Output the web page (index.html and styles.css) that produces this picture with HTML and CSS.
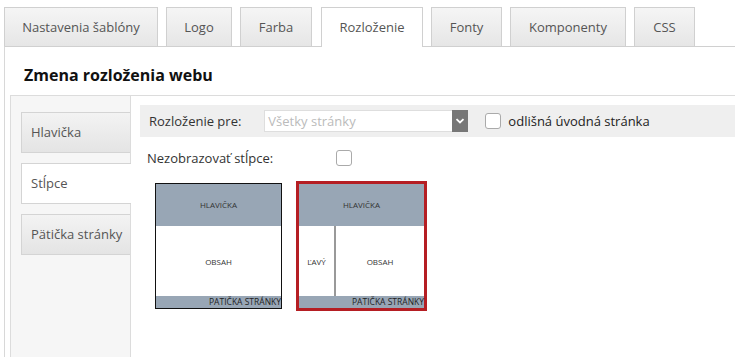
FILE: index.html
```html
<!DOCTYPE html>
<html lang="sk">
<head>
    <meta charset="UTF-8">
    <title>Zmena rozloženia webu</title>
    <link rel="stylesheet" href="styles.css">
</head>
<body>
    <div class="tabs">
        <div class="tab">Nastavenia šablóny</div>
        <div class="tab tab-logo">Logo</div>
        <div class="tab tab-farba">Farba</div>
        <div class="tab active">Rozloženie</div>
        <div class="tab tab-fonty">Fonty</div>
        <div class="tab tab-komp">Komponenty</div>
        <div class="tab tab-css">CSS</div>
    </div>

    <div class="panel">
        <h2 class="title">Zmena rozloženia webu</h2>

        <div class="inner">
            <div class="side">
                <div class="side-tab">Hlavička</div>
                <div class="side-tab active">Stĺpce</div>
                <div class="side-tab">Pätička stránky</div>
            </div>

            <div class="main">
                <div class="form-bar">
                    <span class="label">Rozloženie pre:</span>
                    <div class="select">
                        <span class="select-text">Všetky stránky</span>
                        <span class="select-btn">
                            <svg width="10" height="6" viewBox="0 0 10 6"><path d="M1.5 1.2 L5 4.5 L8.5 1.2" fill="none" stroke="#fff" stroke-width="1.8"/></svg>
                        </span>
                    </div>
                    <span class="check"></span>
                    <span class="check-label">odlišná úvodná stránka</span>
                </div>

                <div class="row">
                    <span class="label">Nezobrazovať stĺpce:</span>
                    <span class="check"></span>
                </div>

                <div class="layouts">
                    <div class="layout">
                        <div class="l-head">HLAVIČKA</div>
                        <div class="l-body">
                            <div class="l-content">OBSAH</div>
                        </div>
                        <div class="l-foot">PATIČKA STRÁNKY</div>
                    </div>
                    <div class="layout selected">
                        <div class="l-head">HLAVIČKA</div>
                        <div class="l-body">
                            <div class="l-left">ĽAVÝ</div>
                            <div class="l-content">OBSAH</div>
                        </div>
                        <div class="l-foot">PATIČKA STRÁNKY</div>
                    </div>
                </div>
            </div>
        </div>
    </div>
</body>
</html>
```

FILE: styles.css
```css
body {
    margin: 0;
    background: #fff;
    font-family: 'Open Sans', 'Noto Sans', sans-serif;
    font-size: 13px;
    color: #333;
    overflow: hidden;
}

.tabs {
    display: flex;
    gap: 8px;
    padding: 7px 0 0 4px;
    position: relative;
    z-index: 1;
}

.tab {
    height: 38px;
    line-height: 38px;
    width: 152px;
    text-align: center;
    color: #555;
    background: linear-gradient(#f5f5f5, #e6e6e6);
    border: 1px solid #d0d0d0;
    border-bottom: none;
    box-sizing: content-box;
}

.tab-logo { width: 64px; }
.tab-farba { width: 70px; }
.tab-fonty { width: 69px; }
.tab-komp { width: 114px; }
.tab-css { width: 59px; }

.tab.active {
    width: 100px;
    margin-left: 1px;
    background: #fff;
    height: 39px;
    margin-bottom: -1px;
}

.panel {
    margin-left: 4px;
    border-top: 1px solid #d0d0d0;
    border-left: 1px solid #d8d8d8;
    height: 320px;
}

.title {
    margin: 0;
    padding: 17px 0 0 19px;
    height: 31px;
    font-size: 16px;
    font-weight: bold;
    color: #111;
}

.inner {
    display: flex;
    margin-left: 5px;
    border-top: 1px solid #dcdcdc;
    border-left: 1px solid #dcdcdc;
    height: 270px;
}

.side {
    width: 109px;
    background: #f6f6f6;
    border-right: 1px solid #dcdcdc;
    padding: 16px 0 0 10px;
    box-sizing: content-box;
    display: flex;
    flex-direction: column;
    gap: 10px;
    position: relative;
}

.side-tab {
    height: 39px;
    line-height: 39px;
    padding-left: 9px;
    color: #555;
    font-size: 13px;
    background: linear-gradient(#f3f3f3, #e4e4e4);
    border: 1px solid #d4d4d4;
    border-right: none;
}

.side-tab.active {
    background: #fff;
    margin-right: -1px;
}

.main {
    flex: 1;
    padding: 9px 0 0 9px;
}

.form-bar {
    display: flex;
    align-items: center;
    height: 32px;
    background: #efefef;
    padding-left: 9px;
}

.label {
    color: #333;
}

.select {
    display: flex;
    margin-left: 23px;
    width: 204px;
    height: 22px;
    border: 1px solid #dedede;
    border-right: none;
    background: #fff;
    box-sizing: border-box;
}

.select-text {
    flex: 1;
    line-height: 20px;
    padding-left: 3px;
    color: #bbb;
}

.select-btn {
    width: 16px;
    height: 22px;
    margin-top: -1px;
    background: #777;
    display: flex;
    align-items: center;
    justify-content: center;
}

.check {
    width: 14px;
    height: 14px;
    border: 1px solid #aaa;
    border-radius: 3px;
    background: #fff;
    display: inline-block;
}

.form-bar .check {
    margin-left: 17px;
}

.check-label {
    margin-left: 7px;
    color: #222;
}

.row {
    display: flex;
    align-items: center;
    height: 22px;
    margin-top: 10px;
    padding-left: 7px;
}

.row .check {
    margin-left: 63px;
}

.layouts {
    display: flex;
    align-items: flex-start;
    gap: 14px;
    margin-top: 12px;
    padding-left: 15px;
}

.layout {
    width: 125px;
    height: 124px;
    border: 1px solid #111;
    display: flex;
    flex-direction: column;
    font-size: 8px;
    color: #333;
    margin-top: 2px;
}

.layout.selected {
    border: 3px solid #b51e23;
    margin-top: 0;
}

.l-head {
    height: 42px;
    line-height: 42px;
    background: #98a6b5;
    text-align: center;
}

.l-body {
    flex: 1;
    display: flex;
    background: #fff;
}

.l-left {
    width: 35px;
    border-right: 2px solid #999;
    display: flex;
    align-items: center;
    justify-content: center;
}

.l-content {
    flex: 1;
    display: flex;
    align-items: center;
    justify-content: center;
}

.l-foot {
    height: 12px;
    line-height: 12px;
    background: #98a6b5;
    text-align: right;
    font-size: 8.5px;
    color: #222;
}
```
